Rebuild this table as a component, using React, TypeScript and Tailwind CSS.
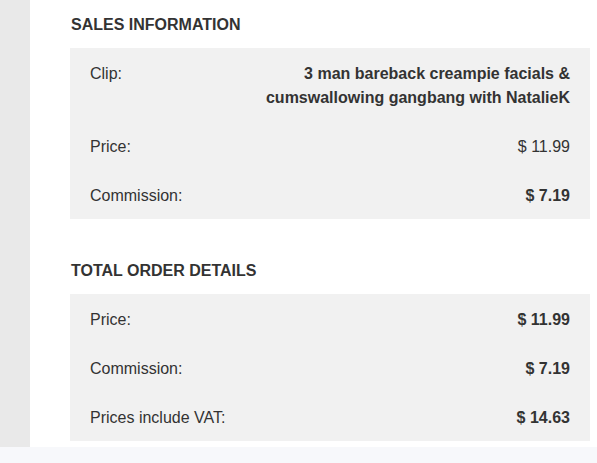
import React from "react";

const font = { fontFamily: '"Liberation Sans", Arial, sans-serif' };

type Row = { label: string; value: string; bold?: boolean };

function Panel({ rows }: { rows: Row[] }) {
  return (
    <div className="bg-[#f1f1f1] pt-[14px] pb-[11px] pl-[20px] pr-[20px] flex flex-col gap-[25px]">
      {rows.map((r) => (
        <div key={r.label} className="flex justify-between text-[16px] leading-[24px] text-[#333333]">
          <div className="w-[160px] shrink-0">{r.label}</div>
          <div className={"flex-1 text-right " + (r.bold ? "font-bold" : "")}>{r.value}</div>
        </div>
      ))}
    </div>
  );
}

export default function App() {
  return (
    <div className="h-[463px] w-full bg-[#f7f8fb]" style={font}>
      <div className="flex h-[447px]">
        <div className="w-[30px] shrink-0 bg-[#e9e9e9]" />
        <div className="flex-1 bg-white pl-[40px] pr-[7px] pt-[13px]">
          <h2 className="text-[16px] leading-[24px] font-bold text-[#333333] pl-[1px]">SALES INFORMATION</h2>
          <div className="mt-[11px]">
            <Panel
              rows={[
                { label: "Clip:", value: "3 man bareback creampie facials & cumswallowing gangbang with NatalieK", bold: true },
                { label: "Price:", value: "$ 11.99" },
                { label: "Commission:", value: "$ 7.19", bold: true },
              ]}
            />
          </div>
          <h2 className="mt-[40px] text-[16px] leading-[24px] font-bold text-[#333333] pl-[1px]">TOTAL ORDER DETAILS</h2>
          <div className="mt-[11px]">
            <Panel
              rows={[
                { label: "Price:", value: "$ 11.99", bold: true },
                { label: "Commission:", value: "$ 7.19", bold: true },
                { label: "Prices include VAT:", value: "$ 14.63", bold: true },
              ]}
            />
          </div>
        </div>
      </div>
    </div>
  );
}
